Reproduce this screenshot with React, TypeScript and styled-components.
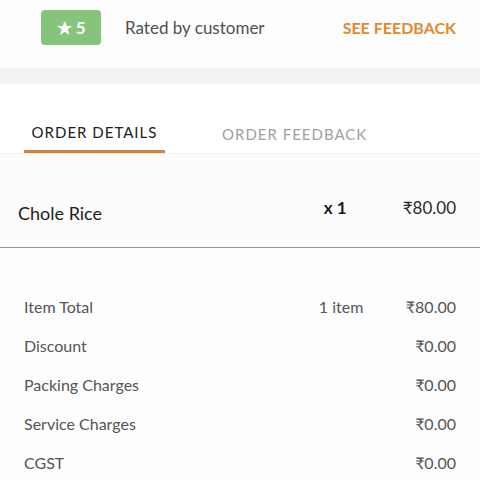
import styled, {createGlobalStyle} from "styled-components";

const GlobalStyle = createGlobalStyle`
    body {
        margin: 0;
        background: #ffffff;
        font-family: "Lato", "Open Sans", sans-serif;
    }
`

const charges = [
    {label: "Item Total", note: "1 item", value: "₹80.00"},
    {label: "Discount", note: "", value: "₹0.00"},
    {label: "Packing Charges", note: "", value: "₹0.00"},
    {label: "Service Charges", note: "", value: "₹0.00"},
    {label: "CGST", note: "", value: "₹0.00"},
];

export default function App() {
    return (
        <Page>
            <GlobalStyle/>
            <RatingBar>
                <Badge>★ 5</Badge>
                <RatedText>Rated by customer</RatedText>
                <FeedbackLink>SEE FEEDBACK</FeedbackLink>
            </RatingBar>
            <Spacer/>
            <Tabs>
                <Tab active>ORDER DETAILS</Tab>
                <Tab>ORDER FEEDBACK</Tab>
            </Tabs>
            <ItemRow>
                <ItemName>Chole Rice</ItemName>
                <ItemQty>x 1</ItemQty>
                <ItemPrice>₹80.00</ItemPrice>
            </ItemRow>
            <Bill>
                {charges.map(c => (
                    <BillRow key={c.label}>
                        <BillLabel>{c.label}</BillLabel>
                        <BillNote>{c.note}</BillNote>
                        <BillValue>{c.value}</BillValue>
                    </BillRow>
                ))}
            </Bill>
        </Page>
    );
}

const Page = styled.div`
    width: 480px;
    height: 480px;
    overflow: hidden;
    background: #fff;
`
const RatingBar = styled.div`
    display: flex;
    align-items: center;
    height: 68px;
    padding: 0 24px 14px 41px;
    box-sizing: border-box;
    background: #fdfdfd;
`
const Badge = styled.div`
    width: 60px;
    height: 35px;
    border-radius: 4px;
    background: #86c47b;
    color: #fff;
    font-size: 17px;
    font-weight: 700;
    display: flex;
    align-items: center;
    justify-content: center;
`
const RatedText = styled.span`
    margin-left: 24px;
    font-size: 17px;
    color: #505050;
`
const FeedbackLink = styled.span`
    margin-left: auto;
    font-size: 16px;
    font-weight: 700;
    color: #e0892f;
`
const Spacer = styled.div`
    height: 16px;
    background: #f3f3f3;
`
const Tabs = styled.div`
    display: flex;
    gap: 57px;
    height: 70px;
    padding-left: 24px;
    align-items: flex-end;
    border-bottom: 1px solid #eeeeee;
    box-sizing: border-box;
`
const Tab = styled.div<{active?: boolean}>`
    width: ${p => p.active ? "141px" : "auto"};
    white-space: nowrap;
    text-align: center;
    font-size: 15px;
    letter-spacing: 1px;
    padding-bottom: 9px;
    color: ${p => p.active ? "#202020" : "#a0a0a0"};
    border-bottom: 3px solid ${p => p.active ? "#cc843f" : "transparent"};
    transform: ${p => p.active ? "none" : "translateY(2px)"};
`
const ItemRow = styled.div`
    display: flex;
    align-items: center;
    height: 94px;
    padding: 14px 24px 0 18px;
    background: #fcfcfc;
    border-bottom: 1px solid #999;
    box-sizing: border-box;
`
const ItemName = styled.span`
    flex: 1;
    font-size: 18px;
    color: #1d1d1d;
    margin-top: 10px;
`
const ItemQty = styled.span`
    width: 79px;
    font-size: 17px;
    font-weight: 700;
    color: #1d1d1d;
`
const ItemPrice = styled.span`
    font-size: 17px;
    color: #2a2a2a;
`
const Bill = styled.div`
    padding: 39px 24px 0;
    background: #fdfdfd;
    height: 300px;
`
const BillRow = styled.div`
    display: flex;
    align-items: center;
    height: 39px;
    font-size: 16px;
    color: #555;
`
const BillLabel = styled.span`
    flex: 1;
`
const BillNote = styled.span`
    width: 87px;
`
const BillValue = styled.span`
    text-align: right;
`
